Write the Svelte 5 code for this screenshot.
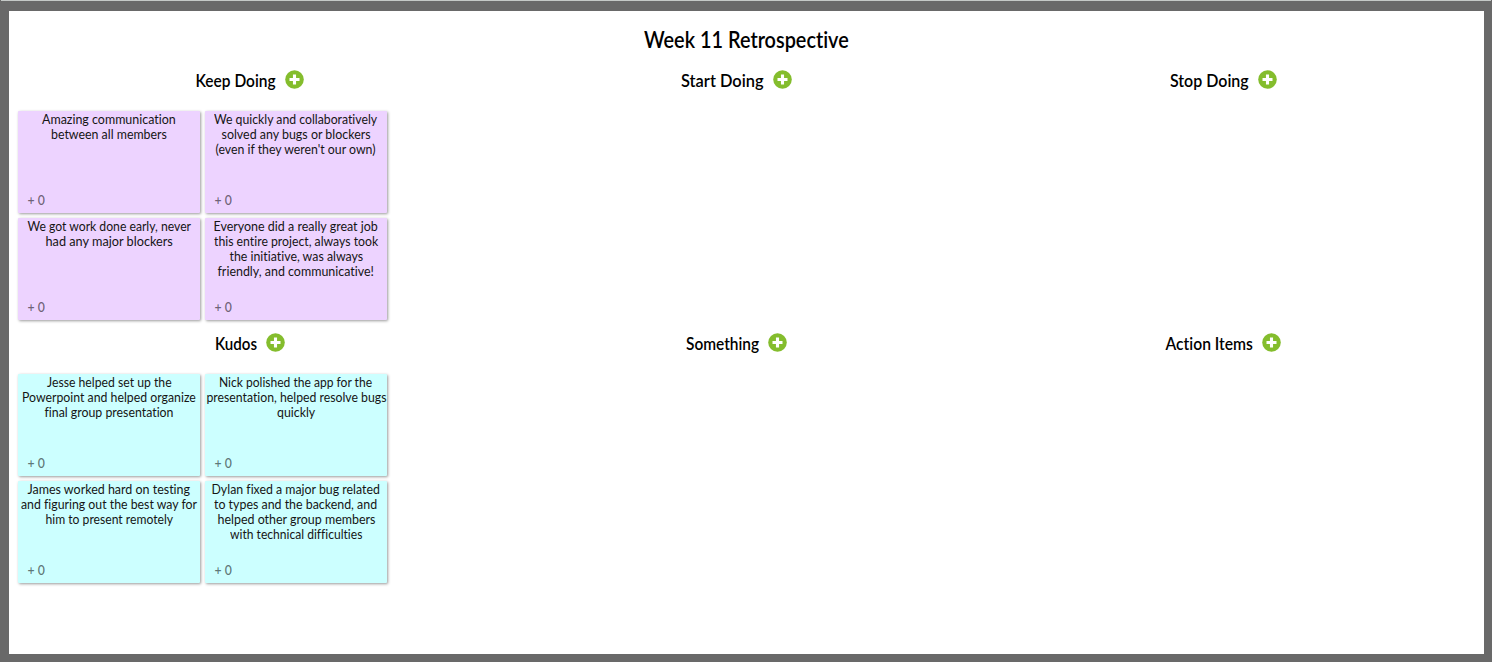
<script>
  const sections = [
    {
      title: 'Keep Doing', width: 80, tone: 'lilac',
      notes: [
        [['Amazing communication', 134], ['between all members', 116]],
        [['We quickly and collaboratively', 163], ['solved any bugs or blockers', 149], ["(even if they weren't our own)", 160]],
        [['We got work done early, never', 164], ['had any major blockers', 127]],
        [['Everyone did a really great job', 164], ['this entire project, always took', 164], ['the initiative, was always', 134], ['friendly, and communicative!', 156]]
      ]
    },
    { title: 'Start Doing', width: 83, tone: 'lilac', notes: [] },
    { title: 'Stop Doing', width: 79, tone: 'lilac', notes: [] },
    {
      title: 'Kudos', width: 42, tone: 'cyan',
      notes: [
        [['Jesse helped set up the', 125], ['Powerpoint and helped organize', 174], ['final group presentation', 129]],
        [['Nick polished the app for the', 153], ['presentation, helped resolve bugs', 180], ['quickly', 38]],
        [['James worked hard on testing', 163], ['and figuring out the best way for', 176], ['him to present remotely', 128]],
        [['Dylan fixed a major bug related', 168], ['to types and the backend, and', 163], ['helped other group members', 158], ['with technical difficulties', 132]]
      ]
    },
    { title: 'Something', width: 73, tone: 'cyan', notes: [] },
    { title: 'Action Items', width: 87, tone: 'cyan', notes: [] }
  ];

  // Scales a line of text horizontally to a set width.
  function fit(node, width) {
    const natural = node.offsetWidth;
    node.style.transform = `scaleX(${width / natural})`;
    node.style.marginInline = `${(width - natural) / 2}px`;
  }
</script>

<main class="board">
  <h1><span class="text" use:fit={205}>Week 11 Retrospective</span></h1>
  <div class="grid">
    {#each sections as section}
      <section>
        <h2>
          <span class="text" use:fit={section.width}>{section.title}</span>
          <svg viewBox="0 0 19 19" width="19" height="19" aria-hidden="true">
            <circle cx="9.5" cy="9.5" r="9.3" fill="#84bd2d" />
            <path d="M9.5 4.5v10M4.5 9.5h10" stroke="#fff" stroke-width="3.1" />
          </svg>
        </h2>
        <div class="notes">
          {#each section.notes as note}
            <article class={section.tone}>
              <p>
                {#each note as line}
                  <span class="line"><span class="text" use:fit={line[1]}>{line[0]}</span></span>
                {/each}
              </p>
              <div class="votes"><span class="text" use:fit={17}>+ 0</span></div>
            </article>
          {/each}
        </div>
      </section>
    {/each}
  </div>
</main>

<style>
  :global(body) {
    margin: 0;
    overflow: hidden;
  }
  .board {
    box-sizing: border-box;
    height: 662px;
    border: solid #696969;
    border-width: 11px 8px 8px 9px;
    background: #fff;
    font-family: Lato, "Open Sans", sans-serif;
    font-variant-ligatures: none;
    color: #000;
    position: relative;
  }
  .board::before {
    content: '';
    position: absolute;
    top: -11px;
    left: -8px;
    right: -7px;
    height: 1px;
    background: #c5c9c7;
  }
  h1, h2, p {
    margin: 0;
  }
  .text {
    display: inline-block;
    white-space: nowrap;
    flex: none;
  }
  h1 {
    height: 53px;
    padding-top: 15px;
    box-sizing: border-box;
    width: 1475px;
    display: flex;
    justify-content: center;
    font-size: 22px;
    line-height: 28px;
    font-weight: 600;
  }
  .grid {
    display: grid;
    grid-template-columns: 482px 491px 483px;
    grid-auto-rows: 263px;
  }
  h2 {
    height: 47px;
    padding-top: 6px;
    box-sizing: border-box;
    display: flex;
    justify-content: center;
    gap: 9px;
    font-size: 18px;
    line-height: 21px;
    font-weight: 600;
  }
  .notes {
    display: grid;
    grid-template-columns: 182px 182px;
    grid-auto-rows: 102px;
    gap: 5px;
    padding-left: 9px;
  }
  article {
    box-sizing: border-box;
    display: flex;
    flex-direction: column;
    justify-content: space-between;
    padding: 1px 0 5px;
    border-radius: 1px;
    box-shadow: 1px 1px 3px rgba(0, 0, 0, 0.4);
    font-size: 13px;
    line-height: 15px;
  }
  .lilac {
    background: #edd3ff;
  }
  .cyan {
    background: #ccffff;
  }
  .line {
    display: flex;
    justify-content: center;
    height: 15px;
    color: #151515;
  }
  .votes {
    display: flex;
    padding-left: 9.5px;
    font-size: 13px;
    font-weight: 600;
    color: rgba(0, 0, 0, 0.54);
  }
</style>
